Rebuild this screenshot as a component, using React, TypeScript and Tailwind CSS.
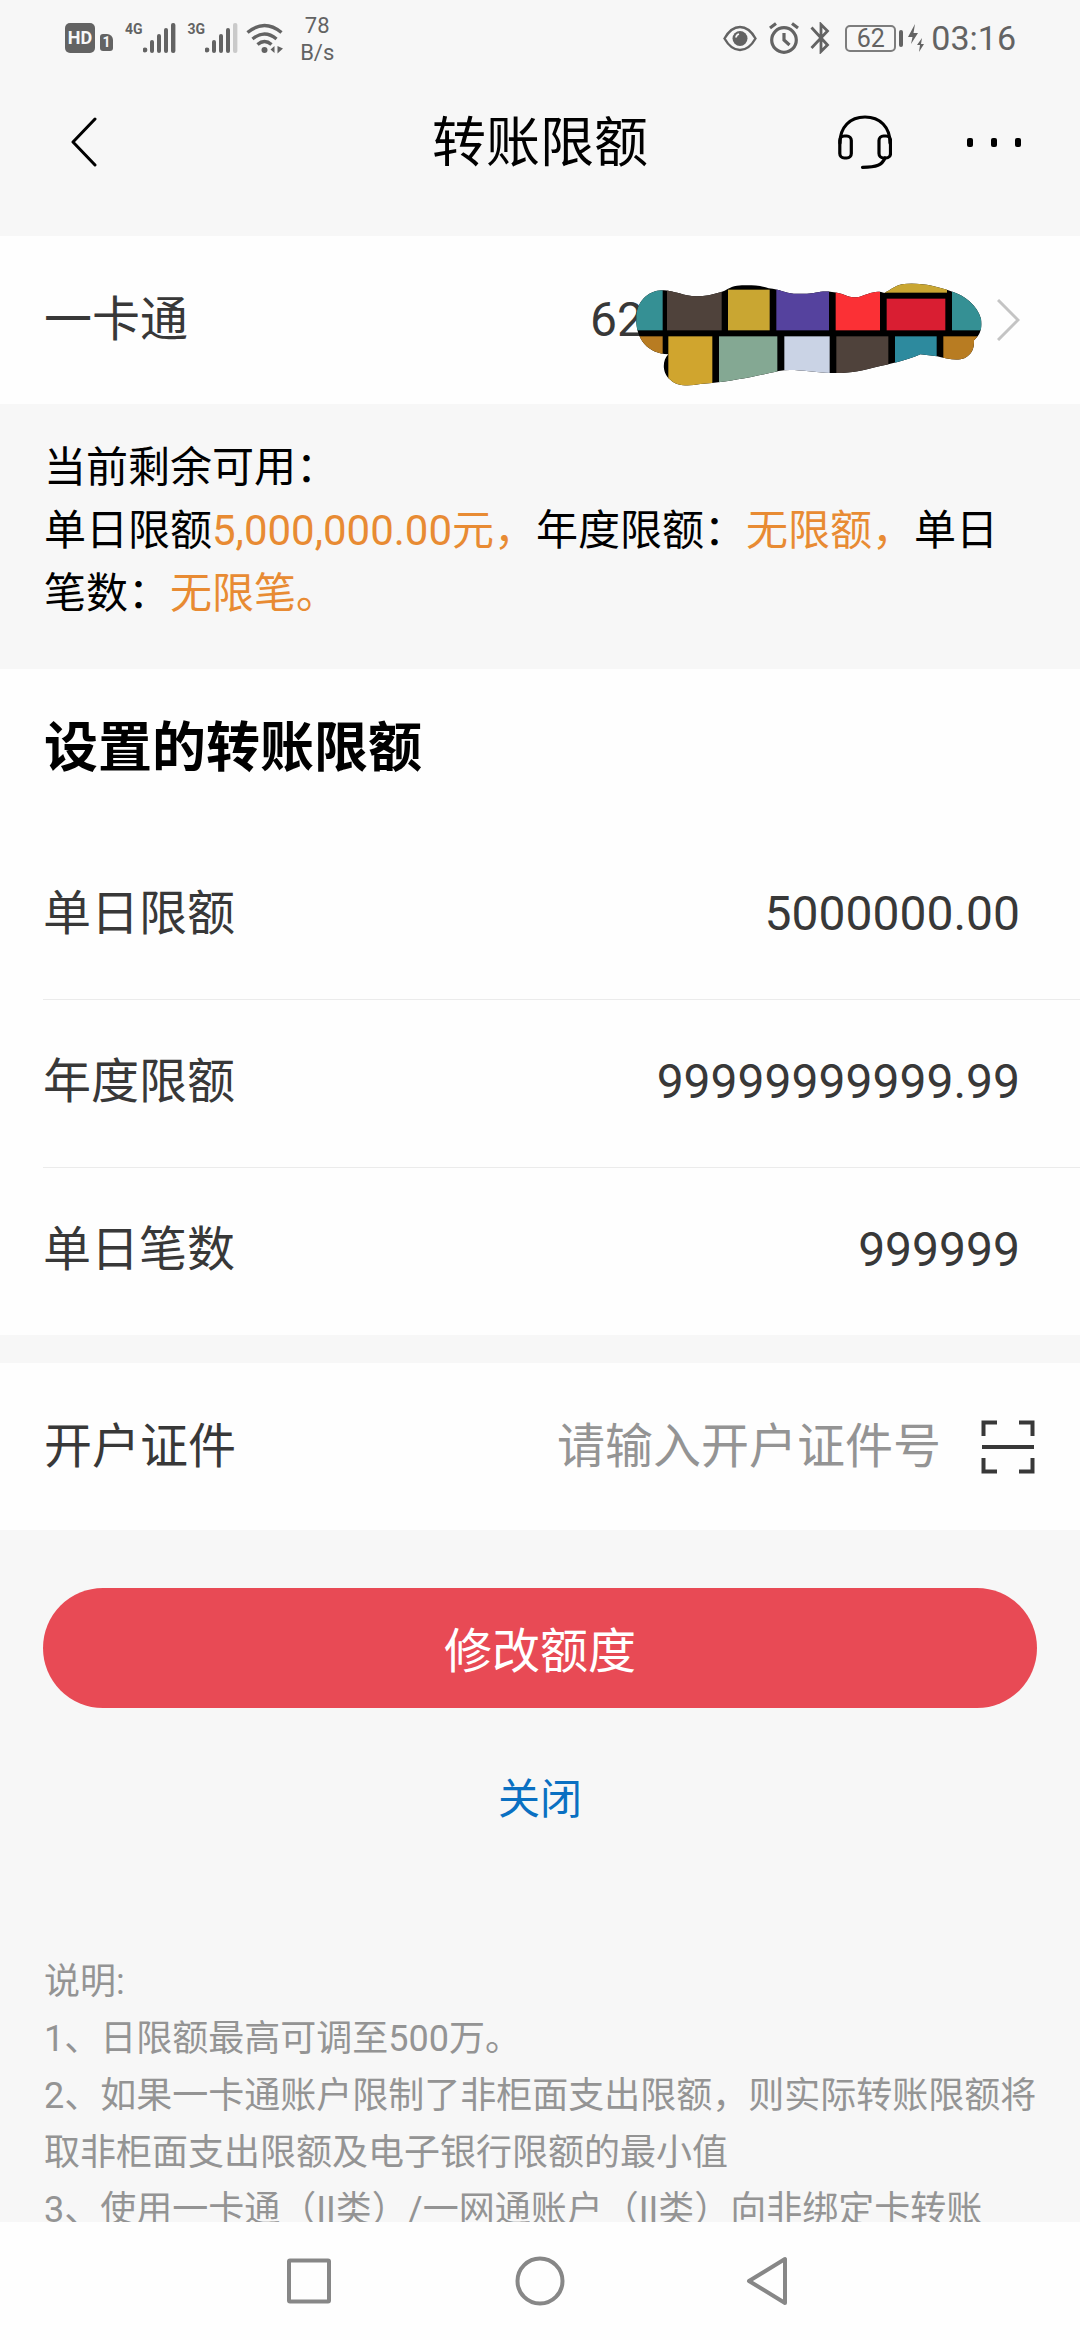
import { useState } from "react";
import type { ReactNode } from "react";

const LIMITS = [
  { id: "daily", label: "单日限额", value: "5000000.00" },
  { id: "yearly", label: "年度限额", value: "99999999999.99" },
  { id: "count", label: "单日笔数", value: "999999" },
];

function Signal({ label, weak }: { label: string; weak?: boolean }) {
  return (
    <span className="flex items-start">
      <span className="text-[14px] leading-[15px] font-bold">{label}</span>
      <svg className="h-8 w-[33px]" viewBox="0 0 33 32" fill="currentColor" aria-hidden="true">
        <circle cx="2" cy="28" r="2.4" />
        <rect x="7" y="18" width="4" height="13" rx="2" />
        <rect x="14" y="12" width="4" height="19" rx="2" />
        <rect x="21" y="6" width="4" height="25" rx="2" />
        <rect x="28" y="1" width="4.4" height="30" rx="2" opacity={weak ? 0.3 : 1} />
      </svg>
    </span>
  );
}

function StatusBar() {
  return (
    <div className="flex h-[76px] items-center justify-between pr-[64px] pl-[65px] text-[#636363]">
      <div className="flex items-center">
        <span className="flex size-[30px] items-center justify-center rounded-[5px] bg-[#636363] text-[18px] leading-none font-bold text-[#f7f7f7]">
          HD
        </span>
        <span className="mt-2 ml-[5px] flex h-[17px] w-[13px] items-center justify-center rounded-[3px] rounded-tr-[6px] bg-[#636363] text-[14px] leading-none font-bold text-[#f7f7f7]">
          1
        </span>
        <span className="ml-3">
          <Signal label="4G" />
        </span>
        <span className="ml-3">
          <Signal label="3G" weak />
        </span>
        <svg className="ml-2 h-[31px] w-[38px]" viewBox="0 0 38 31" fill="none" stroke="currentColor" strokeWidth="3.4" aria-hidden="true">
          <path d="M1.5 9.5Q18.500-4.500 35.500 9.500" />
          <path d="M6.500 16Q18.500 6 30.500 16" />
          <path d="M11.500 21.500Q18.500 15.500 25.500 21.500" />
          <circle cx="18.500" cy="27" r="3" fill="currentColor" stroke="none" />
          <path d="M28.500 23v7l-4-3.500zM31.500 23v7.500l5.500-5z" fill="currentColor" stroke="none" />
        </svg>
        <span className="mt-[2px] ml-4 text-center text-[22px] leading-[27px]">
          78
          <br />
          B/s
        </span>
      </div>
      <div className="flex items-center">
        <svg className="h-[27px] w-[34px]" viewBox="0 0 34 27" fill="none" stroke="currentColor" strokeWidth="2.400" aria-hidden="true">
          <path d="M1.500 13.500Q8 2 17 2T32.500 13.500Q26 25 17 25T1.500 13.500z" />
          <circle cx="17" cy="13.500" r="7.500" fill="currentColor" stroke="none" />
          <path d="M13 12.500a4 4 0 0 1 3-3.500" stroke="#f7f7f7" strokeWidth="1.800" />
        </svg>
        <svg className="ml-3 h-8 w-[30px]" viewBox="0 0 30 32" fill="none" stroke="currentColor" strokeWidth="3.200" aria-hidden="true">
          <circle cx="15" cy="18" r="12.300" />
          <path d="M15 11v7l5.500 5M1 6l6-4.500M23 1.500L29 6" />
        </svg>
        <svg className="ml-[11px] h-8 w-5" viewBox="0 0 20 32" fill="none" stroke="currentColor" strokeWidth="2.800" aria-hidden="true">
          <path d="M1.500 5.500L17.500 23L11 29.500V2.500L17.500 9L1.500 26" />
        </svg>
        <span className="ml-[15px] flex h-[27px] w-[51px] items-center justify-center rounded-[5px] border-2 border-[#7d7d7d] text-[25px] leading-none">
          62
        </span>
        <span className="ml-[3px] h-[17px] w-1 rounded-sm bg-[#636363]" />
        <svg className="ml-[5px] h-7 w-4" viewBox="0 0 16 28" fill="currentColor" aria-hidden="true">
          <path d="M7 0L0 13h4.500L3 20L10 9H5.500zM14 14l-5 7h3L11 28l5-8h-3z" />
        </svg>
        <span className="ml-[7px] text-[34px] leading-none">03:16</span>
      </div>
    </div>
  );
}

function Header() {
  return (
    <header className="grid grid-cols-3 items-center px-[59px] pt-[30px] pb-[58px] text-black">
      <button type="button" aria-label="返回" className="justify-self-start pl-3">
        <svg className="h-[50px] w-[26px]" viewBox="0 0 26 50" fill="none" stroke="currentColor" strokeWidth="3" strokeLinecap="round" strokeLinejoin="round">
          <path d="M24 2L2 25L24 48" />
        </svg>
      </button>
      <h1 className="pt-1 text-center text-[54px] leading-[68px]">转账限额</h1>
      <div className="flex items-center justify-self-end">
        <button type="button" aria-label="客服">
          <svg className="h-[54px] w-[54px]" viewBox="0 0 54 54" fill="none" stroke="currentColor" strokeWidth="3.200" strokeLinecap="round">
            <path d="M2 28C2 12 12 2 27 2S52 12 52 28" />
            <rect x="1.800" y="21" width="11.500" height="22" rx="4.500" />
            <rect x="41" y="21" width="11.500" height="22" rx="4.500" />
            <path d="M47 43C44 50 39 52.300 24.500 52.300" />
          </svg>
        </button>
        <button type="button" aria-label="更多" className="ml-[75px] flex gap-[18px] py-4">
          <span className="h-[9px] w-[6px] rounded-[2px] bg-black" />
          <span className="h-[9px] w-[6px] rounded-[2px] bg-black" />
          <span className="h-[9px] w-[6px] rounded-[2px] bg-black" />
        </button>
      </div>
    </header>
  );
}

function Mosaic() {
  return (
    <svg className="absolute -top-[2px] left-[45px] h-[105px] w-[348px]" viewBox="224 65 1044 315" aria-hidden="true">
      <defs>
        <clipPath id="blot">
          <path d="M310 90C262 88 226 128 228 175C226 235 262 280 324 282C304 302 306 340 330 358C350 378 385 378 420 371L455 368C520 362 600 345 655 332C700 324 750 336 810 338C870 340 900 332 960 317C1010 307 1050 296 1080 282L1130 288C1160 296 1190 302 1212 294C1236 282 1242 262 1241 240C1262 222 1266 200 1262 175C1250 135 1215 105 1170 92C1130 78 1070 64 1025 72C1000 78 990 90 972 98C945 86 920 104 890 111C860 112 850 98 815 95C780 90 765 100 740 100H700C675 98 660 88 625 84C600 74 560 74 530 76C505 80 500 90 480 96C450 106 410 112 380 105C350 98 335 92 310 90z" />
        </clipPath>
      </defs>
      <g clipPath="url(#blot)">
        <rect x="220" y="60" width="1050" height="325" fill="#000" />
        <rect x="220" y="60" width="87" height="150" fill="#359094" />
        <rect x="320" y="60" width="164" height="150" fill="#4f423b" />
        <rect x="503" y="88" width="125" height="122" fill="#c9a632" />
        <rect x="648" y="60" width="158" height="150" fill="#55429e" />
        <rect x="826" y="60" width="133" height="150" fill="#fb3035" />
        <rect x="970" y="60" width="190" height="37" fill="#c9a632" />
        <rect x="979" y="115" width="176" height="95" fill="#d91e32" />
        <rect x="1175" y="60" width="100" height="150" fill="#359094" />
        <rect x="220" y="228" width="87" height="60" fill="#b87c22" />
        <rect x="324" y="228" width="132" height="160" fill="#d0a52e" />
        <rect x="476" y="228" width="175" height="160" fill="#84a893" />
        <rect x="672" y="228" width="136" height="160" fill="#cad3e5" />
        <rect x="828" y="228" width="156" height="160" fill="#4f423b" />
        <rect x="1004" y="228" width="125" height="160" fill="#2d8a9e" />
        <rect x="1149" y="228" width="120" height="160" fill="#b87c22" />
      </g>
    </svg>
  );
}

function Accent({ children }: { children: ReactNode }) {
  return <span className="text-[#e88b33]">{children}</span>;
}

function NavBar() {
  return (
    <nav className="flex h-[118px] shrink-0 items-center justify-center gap-[180px] bg-[#fefefe] text-[#878787]">
      <button type="button" aria-label="最近任务">
        <svg className="size-[50px]" viewBox="0 0 50 50" fill="none" stroke="currentColor" strokeWidth="4" strokeLinejoin="round">
          <rect x="4" y="4.500" width="40" height="41" rx="1" />
        </svg>
      </button>
      <button type="button" aria-label="主屏幕">
        <svg className="size-[50px]" viewBox="0 0 50 50" fill="none" stroke="currentColor" strokeWidth="4">
          <circle cx="25" cy="25" r="22.500" />
        </svg>
      </button>
      <button type="button" aria-label="返回上一页">
        <svg className="size-[50px]" viewBox="0 0 50 50" fill="none" stroke="currentColor" strokeWidth="4" strokeLinejoin="round">
          <path d="M4 25L40 3V47z" />
        </svg>
      </button>
    </nav>
  );
}

export default function App() {
  const [values, setValues] = useState<Record<string, string>>({
    daily: LIMITS[0].value,
    yearly: LIMITS[1].value,
    count: LIMITS[2].value,
  });
  const [idNumber, setIdNumber] = useState("");

  return (
    <div className="flex h-screen flex-col bg-[#f7f7f7] font-[Roboto,'Noto_Sans_CJK_SC',sans-serif] text-[#383838]">
      <main className="min-h-0 flex-1 overflow-hidden">
        <StatusBar />
        <Header />

        <button type="button" className="flex w-full items-center justify-between bg-[#fefefe] py-12 pr-[60px] pl-11 text-left text-[48px] leading-[72px]">
          <span>一卡通</span>
          <span className="flex items-center gap-[15px]">
            <span className="relative w-[392px]">
              62
              <Mosaic />
            </span>
            <svg className="h-[42px] w-[23px]" viewBox="0 0 23 42" fill="none" stroke="#c4c4c4" strokeWidth="3" aria-hidden="true">
              <path d="M1 1L21 21L1 41" />
            </svg>
          </span>
        </button>

        <section className="px-11 pt-8 pb-11 text-[42px] leading-[63px] text-black">
          <p>当前剩余可用：</p>
          <p>
            单日限额<Accent>5,000,000.00元，</Accent>年度限额：<Accent>无限额，</Accent>单日笔数：
            <Accent>无限笔。</Accent>
          </p>
        </section>

        <section className="bg-[#fefefe]">
          <h2 className="px-11 pt-10 pb-[43px] text-[54px] leading-[80px] font-bold text-black">设置的转账限额</h2>
          <div className="ml-[43px] divide-y divide-[#ebebeb]">
            {LIMITS.map((item) => (
              <div key={item.id} className="flex items-center pt-[46px] pr-[60px] pb-[50px] text-[48px] leading-[71px]">
                <label htmlFor={item.id} className="shrink-0">
                  {item.label}
                </label>
                <input
                  id={item.id}
                  className="h-[71px] min-w-0 flex-1 bg-transparent text-right outline-none"
                  inputMode="decimal"
                  value={values[item.id]}
                  onChange={(e) => setValues({ ...values, [item.id]: e.target.value })}
                />
              </div>
            ))}
          </div>
        </section>

        <section className="mt-7 flex items-center bg-[#fefefe] py-12 pr-[45px] pl-11 text-[48px] leading-[71px]">
          <label htmlFor="id-number" className="shrink-0">
            开户证件
          </label>
          <input
            id="id-number"
            className="h-[71px] min-w-0 flex-1 bg-transparent text-right outline-none placeholder:text-[#949494]"
            placeholder="请输入开户证件号"
            value={idNumber}
            onChange={(e) => setIdNumber(e.target.value)}
          />
          <button type="button" aria-label="扫描证件" className="ml-10">
            <svg className="size-[54px]" viewBox="0 0 54 54" fill="none" stroke="#383838" strokeWidth="4">
              <path d="M2.500 16V2.500H16M38 2.500H51.500V16M51.500 38V51.500H38M16 51.500H2.500V38M1 27H53" />
            </svg>
          </button>
        </section>

        <div className="flex flex-col items-center px-[43px] pt-[58px]">
          <button type="button" className="w-full rounded-full bg-[#e84a55] pt-7 pb-5 text-[48px] leading-[72px] text-white">
            修改额度
          </button>
          <button type="button" className="mt-[60px] text-[42px] leading-[63px] text-[#0a70c2]">
            关闭
          </button>
        </div>

        <section className="mt-[123px] pr-10 pl-11 text-[36px] leading-[57px] text-[#949494]">
          <p>说明:</p>
          <p>1、日限额最高可调至500万。</p>
          <p>2、如果一卡通账户限制了非柜面支出限额，则实际转账限额将取非柜面支出限额及电子银行限额的最小值</p>
          <p>3、使用一卡通（II类）/一网通账户（II类）向非绑定卡转账</p>
        </section>
      </main>
      <NavBar />
    </div>
  );
}
